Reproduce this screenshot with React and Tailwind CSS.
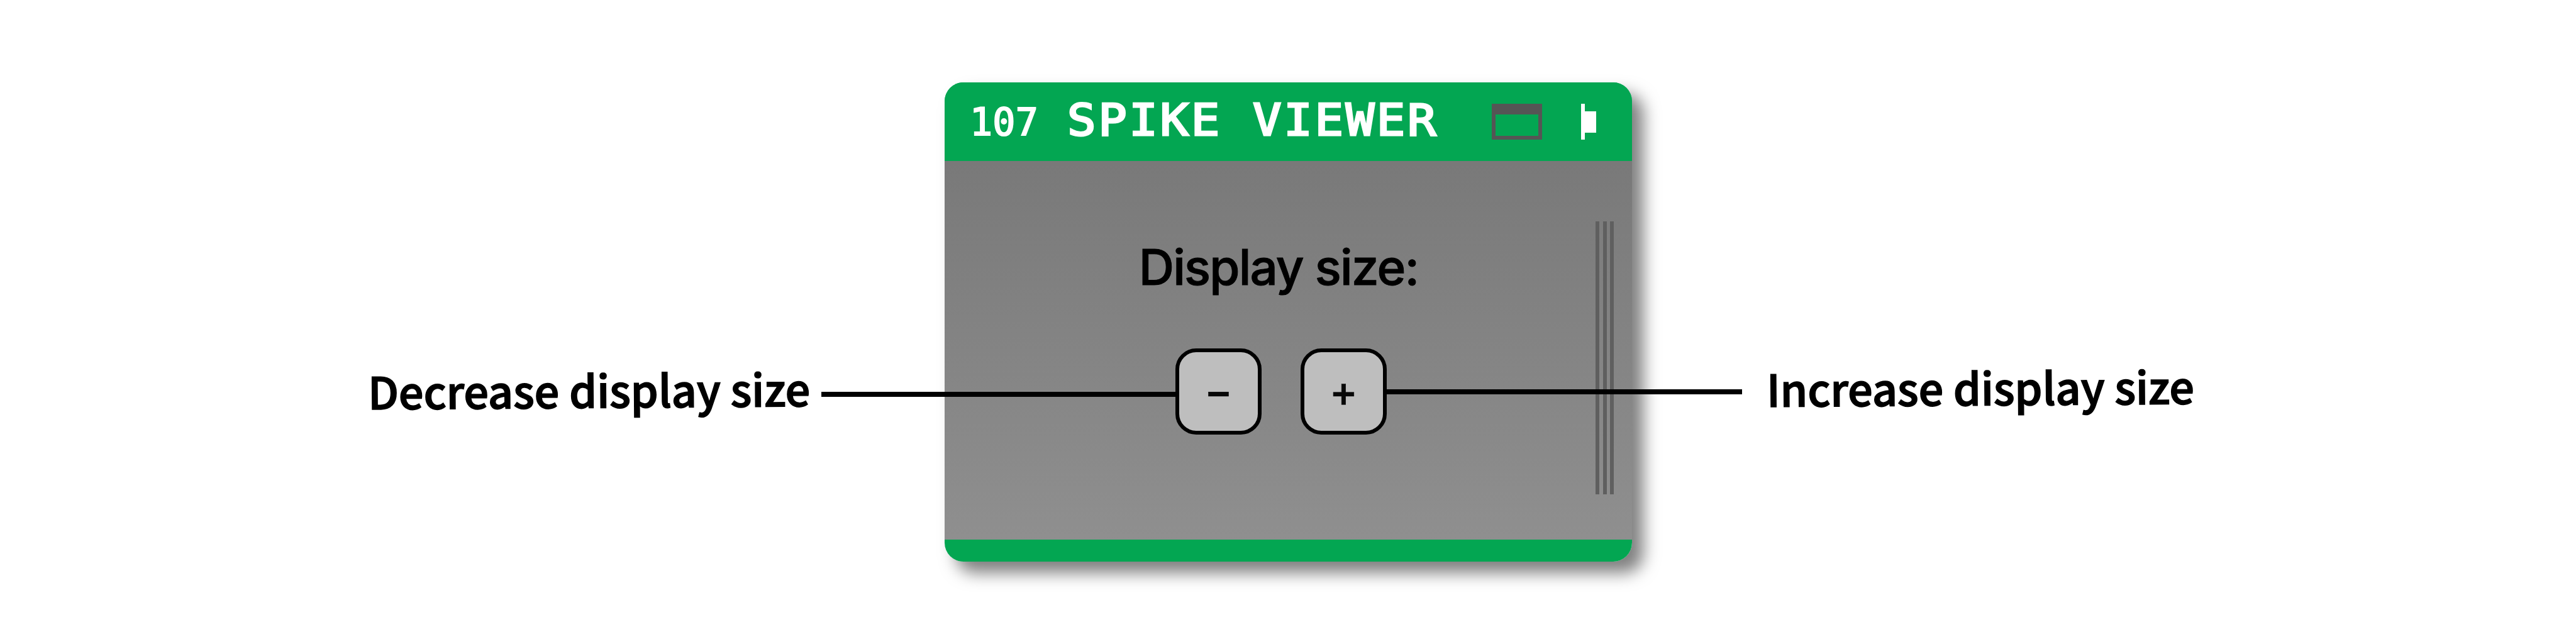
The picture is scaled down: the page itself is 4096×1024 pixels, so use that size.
function TitleBar() {
  return (
    <header className="flex h-[125px] items-start bg-[#03a652] pl-[40px] text-white">
      <span className="mt-[33px] w-[155px] whitespace-pre font-['DejaVu_Sans_Mono'] text-[60px] leading-[61px] tracking-[0.2px] [-webkit-text-stroke:2px_white]">107</span>
      <span className="mt-[19px] w-[640px] origin-left scale-x-108 whitespace-pre font-['DejaVu_Sans_Mono'] text-[70px] leading-[82px] tracking-[3.4px] [-webkit-text-stroke:3px_white]">SPIKE VIEWER</span>
      <span className="ml-[35px] mt-[34px] h-[57px] w-[80px] border-x-6 border-b-6 border-t-17 border-[#555555]" />
      <span className="ml-[62px] mt-[34px] flex h-[57px] items-center">
        <span className="h-full w-[6px] bg-white" />
        <span className="h-[34px] w-[18px] bg-white" />
      </span>
    </header>
  );
}

function SizeButton({ children }) {
  return (
    <button className="flex h-[137px] w-[137px] items-center justify-center rounded-[33px] border-6 border-black bg-[#bebebe] pb-[4px] font-['Inter'] text-[68px] font-medium leading-none text-[#080808] [-webkit-text-stroke:0.6px_#080808]">
      {children}
    </button>
  );
}

function Grip() {
  return (
    <div className="mt-[96px] flex h-[434px] w-[29px] justify-between">
      <span className="w-[6px] bg-[#5f5f5f]" />
      <span className="w-[6px] bg-[#5f5f5f]" />
      <span className="w-[6px] bg-[#5f5f5f]" />
    </div>
  );
}

function ViewerCard() {
  return (
    <section className="ml-[1502px] mt-[131px] flex h-[762px] w-[1093px] flex-col overflow-hidden rounded-[30px] bg-[#03a652]">
      <TitleBar />
      <div className="flex h-[602px] bg-linear-to-b from-[#797979] to-[#8f8f8f]">
        <div className="flex w-[1035px] flex-col items-center pl-[35px]">
          <div className="mt-[121px] h-[96px] whitespace-nowrap pr-[8px] font-['Inter'] text-[78px] font-medium leading-[96px] tracking-[-1.8px] text-black [-webkit-text-stroke:1px_black]">Display size:</div>
          <div className="mt-[81px] flex gap-[62px]">
            <SizeButton>−</SizeButton>
            <SizeButton>+</SizeButton>
          </div>
        </div>
        <Grip />
      </div>
    </section>
  );
}

export default function App() {
  return (
    <main className="relative flex h-[1024px] w-[4096px] items-start overflow-hidden bg-white">
      <div className="absolute left-[1502px] top-[131px] h-[762px] w-[1093px] rounded-[30px] shadow-[18px_18px_26px_rgba(0,0,0,0.5)]" />
      <div className="relative">
        <ViewerCard />
      </div>

      <div className="absolute left-[585px] top-[575px] flex h-[104px] items-center whitespace-nowrap">
        <span className="-mt-[12px] w-[721px] origin-left rotate-[-0.4deg] font-['Noto_Sans_CJK_JP','Noto_Sans_CJK_SC'] text-[70px] font-medium leading-[104px] tracking-[-0.05px] text-black [-webkit-text-stroke:1.6px_black]">Decrease display size</span>
        <span className="h-[8px] w-[564px] bg-black" />
      </div>

      <div className="absolute left-[2205px] top-[571px] flex h-[104px] items-center whitespace-nowrap">
        <span className="h-[8px] w-[565px] bg-black" />
        <span className="-mt-[12px] ml-[39px] w-[721px] origin-left rotate-[-0.4deg] font-['Noto_Sans_CJK_JP','Noto_Sans_CJK_SC'] text-[70px] font-medium leading-[104px] tracking-[-0.05px] text-black [-webkit-text-stroke:1.6px_black]">Increase display size</span>
      </div>
    </main>
  );
}
